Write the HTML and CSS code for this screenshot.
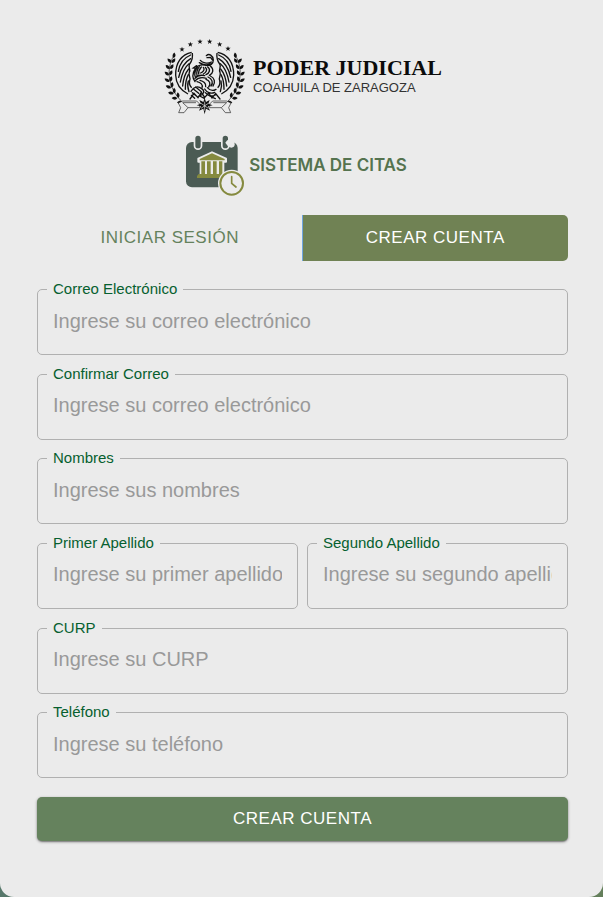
FILE: index.html
```html
<!DOCTYPE html>
<html lang="es">
<head>
<meta charset="utf-8">
<meta name="viewport" content="width=device-width, initial-scale=1">
<title>Sistema de Citas</title>
<link rel="stylesheet" href="styles.css">
</head>
<body>
<main class="card">
  <header class="brand">
    <div class="court">
      <svg class="crest" viewBox="24 24 246 234" aria-hidden="true">
        <defs>
          <path id="star" d="M0-8 2-2.6 8-2.4 3.2 1.2 5 7 0 3.6-5 7-3.2 1.2-8-2.4-2-2.6Z"/>
          <path id="leaf" d="M0 0C-6-4-6-11 0-17C6-11 6-4 0 0Z"/>
          <g id="side">
            <path class="line" d="M57 76C33 114 36 174 84 218"/>
            <use href="#leaf" transform="translate(56 84) rotate(8)"/>
            <use href="#leaf" transform="translate(49 98) rotate(-42)"/>
            <use href="#leaf" transform="translate(51 99) rotate(34)"/>
            <use href="#leaf" transform="translate(44 117) rotate(-44)"/>
            <use href="#leaf" transform="translate(46 117) rotate(32)"/>
            <use href="#leaf" transform="translate(42 136) rotate(-50)"/>
            <use href="#leaf" transform="translate(44 136) rotate(26)"/>
            <use href="#leaf" transform="translate(43 155) rotate(-57)"/>
            <use href="#leaf" transform="translate(45 155) rotate(18)"/>
            <use href="#leaf" transform="translate(48 174) rotate(-67)"/>
            <use href="#leaf" transform="translate(50 173) rotate(8)"/>
            <use href="#leaf" transform="translate(56 191) rotate(-77)"/>
            <use href="#leaf" transform="translate(58 190) rotate(-2)"/>
            <use href="#leaf" transform="translate(67 205) rotate(-86)"/>
            <use href="#leaf" transform="translate(70 204) rotate(-6)"/>
            <use href="#leaf" transform="translate(83 216) rotate(-95)"/>
            <path class="wing" d="M110 67C81 72 61 98 62 136C63 161 77 181 99 192M112 69C114 84 110 94 104 102C98 112 108 116 103 127C99 136 108 141 104 151C102 160 106 169 110 173"/>
            <path class="feather" d="M107 75C85 84 74 100 70 124M107 86C88 97 77 114 71 142M102 101C89 111 81 129 76 156M101 117C90 130 85 146 83 168M100 134C94 145 91 159 91 178M100 153C97 164 98 175 102 185"/>
          </g>
        </defs>
        <use href="#star" x="81" y="58"/><use href="#star" x="106" y="43"/><use href="#star" x="135" y="35"/>
        <use href="#star" x="164" y="35"/><use href="#star" x="194" y="43"/><use href="#star" x="219" y="56"/>
        <use href="#side"/>
        <use href="#side" transform="translate(298 0) scale(-1 1)"/>
        <path class="body" d="M154 77C162 69 174 76 175 90C175 102 166 108 153 106C139 103 130 104 122 115M156 83L167 82 172 90M136 91C142 98 157 103 169 96M133 98C143 105 158 106 170 101M125 107L115 114 125 115"/>
        <path class="body" d="M121 116C114 127 111 143 120 155M127 111C120 121 118 133 121 141M133 110C126 119 124 129 126 137M139 111C132 119 130 125 131 132M145 112C151 119 144 126 137 129M151 112C159 119 153 128 145 132M158 111C168 118 163 130 153 134M166 108C178 118 174 132 163 136M120 145C126 138 137 134 149 137M121 152C129 143 142 141 154 145M166 138C179 143 182 158 174 168M159 141C171 146 176 158 168 168M153 148C163 151 169 161 161 171M135 151C145 153 154 160 152 170M126 155C137 157 145 165 141 173"/>
        <path class="body" d="M108 184C116 171 129 166 140 176C151 183 146 194 135 197M115 177L131 190M122 171L139 185M112 188L127 200M149 177C155 187 167 193 179 187M157 173C164 181 173 184 183 178M151 188C159 197 170 201 181 195M105 207L117 190 129 203 139 187 149 202 161 189 171 204 182 191 195 207M109 196L119 205M134 198L148 205M164 198L181 206"/>
        <path class="ribbon" d="M70 219L83 213H125L134 222V233H99L87 248H71L77 233ZM228 219L215 213H173L164 222V233H199L211 248H227L221 233Z"/>
        <path class="line" d="M83 218L99 233M83 218H123M215 218L199 233M215 218H175"/>
        <path d="M149 204L153 216 164 210 160 221 173 226 159 229 165 242 153 236 149 253 145 236 132 242 138 229 125 226 138 221 133 210 145 216Z"/>
        <path class="cut" d="M149 215V242M138 220L160 235M160 220L138 235"/>
      </svg>
      <div class="court-text">
        <span class="court-name">PODER JUDICIAL</span>
        <span class="court-place">COAHUILA DE ZARAGOZA</span>
      </div>
    </div>
    <div class="system">
      <svg class="calendar" viewBox="30 24 186 192" aria-hidden="true">
        <rect class="slate" x="36" y="51" width="155" height="136" rx="18"/>
        <path class="halo" d="M72 40V62M154 40V62"/>
        <circle class="halo-fill" cx="172" cy="58" r="10"/>
        <path class="ring" d="M72 40V62M154 40V62"/>
        <path class="halo-fill" d="M154 53L160 45 168 50 163 65Z"/>
        <path class="building-edge" d="M114 82L73 101V110H156V101Z"/>
        <path class="olive" d="M114 85L77 102V106H152V102Z"/>
        <path class="halo-fill" d="M77 109H151V148H77Z"/>
        <path class="olive" d="M82 109H93V148H82ZM99 109H110V148H99ZM117 109H128V148H117ZM135 109H145V148H135ZM74 147H151V159H69V153Z"/>
        <circle class="halo-fill" cx="173" cy="175" r="41"/>
        <circle class="clock" cx="173" cy="175" r="34"/>
        <path class="hands" d="M173 155V175L186 186"/>
      </svg>
      <h1 class="system-name">SISTEMA DE CITAS</h1>
    </div>
  </header>
  <nav class="tabs" aria-label="Acceso">
    <button class="tab" type="button">INICIAR SESIÓN</button>
    <button class="tab active" type="button" aria-current="page">CREAR CUENTA</button>
  </nav>
  <form class="form">
    <div class="field">
      <label for="email">Correo Electrónico</label>
      <input id="email" type="email" placeholder="Ingrese su correo electrónico">
    </div>
    <div class="field">
      <label for="confirm">Confirmar Correo</label>
      <input id="confirm" type="email" placeholder="Ingrese su correo electrónico">
    </div>
    <div class="field">
      <label for="names">Nombres</label>
      <input id="names" type="text" placeholder="Ingrese sus nombres">
    </div>
    <div class="pair">
      <div class="field">
        <label for="first">Primer Apellido</label>
        <input id="first" type="text" placeholder="Ingrese su primer apellido">
      </div>
      <div class="field">
        <label for="second">Segundo Apellido</label>
        <input id="second" type="text" placeholder="Ingrese su segundo apellido">
      </div>
    </div>
    <div class="field">
      <label for="curp">CURP</label>
      <input id="curp" type="text" placeholder="Ingrese su CURP">
    </div>
    <div class="field">
      <label for="phone">Teléfono</label>
      <input id="phone" type="tel" placeholder="Ingrese su teléfono">
    </div>
    <button class="submit" type="submit">CREAR CUENTA</button>
  </form>
</main>
</body>
</html>
```
FILE: styles.css
```css
* { box-sizing: border-box; }

body {
  margin: 0;
  background: linear-gradient(90deg, #57786b, #647f5b);
  font-family: "Liberation Sans", Arial, sans-serif;
}

.card {
  display: flex;
  flex-direction: column;
  min-height: 100vh;
  padding: 38px 35px 56px 37px;
  border-radius: 0 0 14px 14px;
  background: #ebebeb;
}

.brand {
  display: flex;
  flex-direction: column;
  align-items: center;
  gap: 17px;
  margin-bottom: 18px;
}

.court { display: flex; align-items: center; gap: 8px; }
.crest { width: 82px; height: 78px; fill: #111; }
.crest .line { fill: none; stroke: #222; stroke-width: 2; }
.crest .wing { fill: none; stroke: #111; stroke-width: 4; }
.crest .feather { fill: none; stroke: #111; stroke-width: 4; stroke-linecap: round; }
.crest .body { fill: none; stroke: #111; stroke-width: 4; stroke-linecap: round; }
.crest .ribbon { fill: #ebebeb; stroke: #222; stroke-width: 2; }
.crest .cut { stroke: #ebebeb; stroke-width: 2; }

.court-text { display: flex; flex-direction: column; color: #0b0b0b; white-space: nowrap; }
.court-name { font: 700 22px/22px "Liberation Serif", "Times New Roman", serif; }
.court-place { font: 13px/18px "Liberation Sans", Arial, sans-serif; color: #333; }

.system { display: flex; align-items: center; gap: 3px; padding-right: 14px; }
.calendar { width: 62px; height: 64px; }
.slate { fill: #4b5b54; }
.halo { fill: none; stroke: #ebebeb; stroke-width: 26; stroke-linecap: round; }
.halo-fill { fill: #ebebeb; }
.ring { fill: none; stroke: #4b5b54; stroke-width: 16; stroke-linecap: round; }
.building-edge { fill: #ebebeb; stroke: #ebebeb; stroke-width: 6; stroke-linejoin: round; }
.olive { fill: #858a3f; }
.clock { fill: #ebebeb; stroke: #858a3f; stroke-width: 6; }
.hands { fill: none; stroke: #858a3f; stroke-width: 5; stroke-linecap: round; }
.system-name { margin: 0; font: 600 17px/24px Inter, sans-serif; color: #55734f; white-space: nowrap; }

.tabs { display: grid; grid-template-columns: 1fr 1fr; margin-bottom: 28px; }
.tab {
  height: 46px;
  padding: 0;
  border: 0;
  background: transparent;
  color: #65825d;
  font: 17px/30px "Liberation Sans", Arial, sans-serif;
  letter-spacing: 0.03em;
}
.tab.active {
  margin-left: -1px;
  border-left: 1px solid #6fa5df;
  border-radius: 0 5px 5px 0;
  background: #708254;
  color: #fff;
}

.form { display: flex; flex: 1; flex-direction: column; justify-content: space-between; }
.pair { display: grid; grid-template-columns: 1fr 1fr; gap: 9px; }
.field { position: relative; min-width: 0; }
.field label {
  position: absolute;
  top: -9px;
  left: 10px;
  padding: 0 6px;
  background: #ebebeb;
  color: #06602f;
  font-size: 15px;
  line-height: 18px;
}
.field input {
  display: block;
  width: 100%;
  height: 66px;
  padding: 0 15px 2px;
  border: 1px solid #b0b0b0;
  border-radius: 5px;
  background: transparent;
  color: #222;
  font: 20px/28px "Liberation Sans", Arial, sans-serif;
}
.field input::placeholder { color: #999; opacity: 1; }

.submit {
  height: 44px;
  border: 0;
  border-radius: 5px;
  background: #65825d;
  box-shadow: 0 1px 3px rgba(0, 0, 0, 0.4), 0 1px 1px rgba(0, 0, 0, 0.2);
  color: #fff;
  font: 17px/30px "Liberation Sans", Arial, sans-serif;
  letter-spacing: 0.03em;
}
```
